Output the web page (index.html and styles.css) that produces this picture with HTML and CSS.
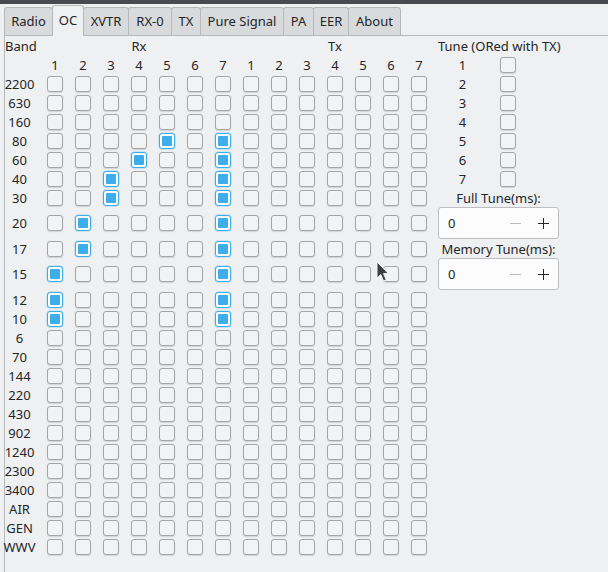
FILE: index.html
```html
<!DOCTYPE html>
<html>
<head>
<meta charset="utf-8">
<link rel="stylesheet" href="styles.css">
</head>
<body>
<div class="strip"></div>
<div class="tabbar">
  <div class="tab t-radio">Radio</div>
  <div class="tab t-oc active">OC</div>
  <div class="tab t-xvtr">XVTR</div>
  <div class="tab t-rx0">RX-0</div>
  <div class="tab t-tx">TX</div>
  <div class="tab t-ps">Pure Signal</div>
  <div class="tab t-pa">PA</div>
  <div class="tab t-eer">EER</div>
  <div class="tab t-about">About</div>
</div>
<div class="pane">
  <div class="grid">
    <div class="hd band-hd">Band</div>
    <div class="hd rx-hd">Rx</div>
    <div class="hd tx-hd">Tx</div>

    <div class="num first">1</div><div class="num">2</div><div class="num">3</div><div class="num">4</div><div class="num">5</div><div class="num">6</div><div class="num">7</div><div class="num">1</div><div class="num">2</div><div class="num">3</div><div class="num">4</div><div class="num">5</div><div class="num">6</div><div class="num">7</div>

    <div class="bl">2200</div><i class="cb"></i><i class="cb"></i><i class="cb"></i><i class="cb"></i><i class="cb"></i><i class="cb"></i><i class="cb"></i><i class="cb"></i><i class="cb"></i><i class="cb"></i><i class="cb"></i><i class="cb"></i><i class="cb"></i><i class="cb"></i>
    <div class="bl">630</div><i class="cb"></i><i class="cb"></i><i class="cb"></i><i class="cb"></i><i class="cb"></i><i class="cb"></i><i class="cb"></i><i class="cb"></i><i class="cb"></i><i class="cb"></i><i class="cb"></i><i class="cb"></i><i class="cb"></i><i class="cb"></i>
    <div class="bl">160</div><i class="cb"></i><i class="cb"></i><i class="cb"></i><i class="cb"></i><i class="cb"></i><i class="cb"></i><i class="cb"></i><i class="cb"></i><i class="cb"></i><i class="cb"></i><i class="cb"></i><i class="cb"></i><i class="cb"></i><i class="cb"></i>
    <div class="bl">80</div><i class="cb"></i><i class="cb"></i><i class="cb"></i><i class="cb"></i><i class="cb on"></i><i class="cb"></i><i class="cb on"></i><i class="cb"></i><i class="cb"></i><i class="cb"></i><i class="cb"></i><i class="cb"></i><i class="cb"></i><i class="cb"></i>
    <div class="bl">60</div><i class="cb"></i><i class="cb"></i><i class="cb"></i><i class="cb on"></i><i class="cb"></i><i class="cb"></i><i class="cb on"></i><i class="cb"></i><i class="cb"></i><i class="cb"></i><i class="cb"></i><i class="cb"></i><i class="cb"></i><i class="cb"></i>
    <div class="bl">40</div><i class="cb"></i><i class="cb"></i><i class="cb on"></i><i class="cb"></i><i class="cb"></i><i class="cb"></i><i class="cb on"></i><i class="cb"></i><i class="cb"></i><i class="cb"></i><i class="cb"></i><i class="cb"></i><i class="cb"></i><i class="cb"></i>
    <div class="bl">30</div><i class="cb"></i><i class="cb"></i><i class="cb on"></i><i class="cb"></i><i class="cb"></i><i class="cb"></i><i class="cb on"></i><i class="cb"></i><i class="cb"></i><i class="cb"></i><i class="cb"></i><i class="cb"></i><i class="cb"></i><i class="cb"></i>
    <div class="bl">20</div><i class="cb"></i><i class="cb on"></i><i class="cb"></i><i class="cb"></i><i class="cb"></i><i class="cb"></i><i class="cb on"></i><i class="cb"></i><i class="cb"></i><i class="cb"></i><i class="cb"></i><i class="cb"></i><i class="cb"></i><i class="cb"></i>
    <div class="bl">17</div><i class="cb"></i><i class="cb on"></i><i class="cb"></i><i class="cb"></i><i class="cb"></i><i class="cb"></i><i class="cb on"></i><i class="cb"></i><i class="cb"></i><i class="cb"></i><i class="cb"></i><i class="cb"></i><i class="cb"></i><i class="cb"></i>
    <div class="bl">15</div><i class="cb on"></i><i class="cb"></i><i class="cb"></i><i class="cb"></i><i class="cb"></i><i class="cb"></i><i class="cb on"></i><i class="cb"></i><i class="cb"></i><i class="cb"></i><i class="cb"></i><i class="cb"></i><i class="cb"></i><i class="cb"></i>
    <div class="bl">12</div><i class="cb on"></i><i class="cb"></i><i class="cb"></i><i class="cb"></i><i class="cb"></i><i class="cb"></i><i class="cb on"></i><i class="cb"></i><i class="cb"></i><i class="cb"></i><i class="cb"></i><i class="cb"></i><i class="cb"></i><i class="cb"></i>
    <div class="bl">10</div><i class="cb on"></i><i class="cb"></i><i class="cb"></i><i class="cb"></i><i class="cb"></i><i class="cb"></i><i class="cb on"></i><i class="cb"></i><i class="cb"></i><i class="cb"></i><i class="cb"></i><i class="cb"></i><i class="cb"></i><i class="cb"></i>
    <div class="bl">6</div><i class="cb"></i><i class="cb"></i><i class="cb"></i><i class="cb"></i><i class="cb"></i><i class="cb"></i><i class="cb"></i><i class="cb"></i><i class="cb"></i><i class="cb"></i><i class="cb"></i><i class="cb"></i><i class="cb"></i><i class="cb"></i>
    <div class="bl">70</div><i class="cb"></i><i class="cb"></i><i class="cb"></i><i class="cb"></i><i class="cb"></i><i class="cb"></i><i class="cb"></i><i class="cb"></i><i class="cb"></i><i class="cb"></i><i class="cb"></i><i class="cb"></i><i class="cb"></i><i class="cb"></i>
    <div class="bl">144</div><i class="cb"></i><i class="cb"></i><i class="cb"></i><i class="cb"></i><i class="cb"></i><i class="cb"></i><i class="cb"></i><i class="cb"></i><i class="cb"></i><i class="cb"></i><i class="cb"></i><i class="cb"></i><i class="cb"></i><i class="cb"></i>
    <div class="bl">220</div><i class="cb"></i><i class="cb"></i><i class="cb"></i><i class="cb"></i><i class="cb"></i><i class="cb"></i><i class="cb"></i><i class="cb"></i><i class="cb"></i><i class="cb"></i><i class="cb"></i><i class="cb"></i><i class="cb"></i><i class="cb"></i>
    <div class="bl">430</div><i class="cb"></i><i class="cb"></i><i class="cb"></i><i class="cb"></i><i class="cb"></i><i class="cb"></i><i class="cb"></i><i class="cb"></i><i class="cb"></i><i class="cb"></i><i class="cb"></i><i class="cb"></i><i class="cb"></i><i class="cb"></i>
    <div class="bl">902</div><i class="cb"></i><i class="cb"></i><i class="cb"></i><i class="cb"></i><i class="cb"></i><i class="cb"></i><i class="cb"></i><i class="cb"></i><i class="cb"></i><i class="cb"></i><i class="cb"></i><i class="cb"></i><i class="cb"></i><i class="cb"></i>
    <div class="bl">1240</div><i class="cb"></i><i class="cb"></i><i class="cb"></i><i class="cb"></i><i class="cb"></i><i class="cb"></i><i class="cb"></i><i class="cb"></i><i class="cb"></i><i class="cb"></i><i class="cb"></i><i class="cb"></i><i class="cb"></i><i class="cb"></i>
    <div class="bl">2300</div><i class="cb"></i><i class="cb"></i><i class="cb"></i><i class="cb"></i><i class="cb"></i><i class="cb"></i><i class="cb"></i><i class="cb"></i><i class="cb"></i><i class="cb"></i><i class="cb"></i><i class="cb"></i><i class="cb"></i><i class="cb"></i>
    <div class="bl">3400</div><i class="cb"></i><i class="cb"></i><i class="cb"></i><i class="cb"></i><i class="cb"></i><i class="cb"></i><i class="cb"></i><i class="cb"></i><i class="cb"></i><i class="cb"></i><i class="cb"></i><i class="cb"></i><i class="cb"></i><i class="cb"></i>
    <div class="bl">AIR</div><i class="cb"></i><i class="cb"></i><i class="cb"></i><i class="cb"></i><i class="cb"></i><i class="cb"></i><i class="cb"></i><i class="cb"></i><i class="cb"></i><i class="cb"></i><i class="cb"></i><i class="cb"></i><i class="cb"></i><i class="cb"></i>
    <div class="bl">GEN</div><i class="cb"></i><i class="cb"></i><i class="cb"></i><i class="cb"></i><i class="cb"></i><i class="cb"></i><i class="cb"></i><i class="cb"></i><i class="cb"></i><i class="cb"></i><i class="cb"></i><i class="cb"></i><i class="cb"></i><i class="cb"></i>
    <div class="bl">WWV</div><i class="cb"></i><i class="cb"></i><i class="cb"></i><i class="cb"></i><i class="cb"></i><i class="cb"></i><i class="cb"></i><i class="cb"></i><i class="cb"></i><i class="cb"></i><i class="cb"></i><i class="cb"></i><i class="cb"></i><i class="cb"></i>

    <div class="rc r1 tune-hd">Tune (ORed with TX)</div>
    <div class="rc r2 tune"><span class="tn">1</span><i class="cb"></i></div>
    <div class="rc r3 tune"><span class="tn">2</span><i class="cb"></i></div>
    <div class="rc r4 tune"><span class="tn">3</span><i class="cb"></i></div>
    <div class="rc r5 tune"><span class="tn">4</span><i class="cb"></i></div>
    <div class="rc r6 tune"><span class="tn">5</span><i class="cb"></i></div>
    <div class="rc r7 tune"><span class="tn">6</span><i class="cb"></i></div>
    <div class="rc r8 tune"><span class="tn">7</span><i class="cb"></i></div>
    <div class="rc r9 lbl">Full Tune(ms):</div>
    <div class="rc r10 spin">
      <span class="val">0</span>
      <svg class="minus" width="11" height="11" viewBox="0 0 11 11"><path d="M0 5.5H11" stroke="#b9bbbd" stroke-width="1"/></svg>
      <svg class="plus" width="11" height="11" viewBox="0 0 11 11"><path d="M0 5.5H11M5.5 0V11" stroke="#232629" stroke-width="1"/></svg>
    </div>
    <div class="rc r11 lbl">Memory Tune(ms):</div>
    <div class="rc r12 spin">
      <span class="val">0</span>
      <svg class="minus" width="11" height="11" viewBox="0 0 11 11"><path d="M0 5.5H11" stroke="#b9bbbd" stroke-width="1"/></svg>
      <svg class="plus" width="11" height="11" viewBox="0 0 11 11"><path d="M0 5.5H11M5.5 0V11" stroke="#232629" stroke-width="1"/></svg>
    </div>
  </div>
</div>
<svg class="cursor" width="14" height="22" viewBox="0 0 14 22"><path d="M1 1V17L4.8 13.6L7.6 20L10.2 18.8L7.5 12.6H12.4Z" fill="#3a3d41" stroke="#f4f4f4" stroke-width="1" stroke-linejoin="round"/></svg>
</body>
</html>
```
FILE: styles.css
```css
html, body {
  margin: 0;
  padding: 0;
  background: #eff0f1;
  font-family: "Noto Sans", "DejaVu Sans", sans-serif;
  font-size: 13px;
  color: #232629;
  overflow: hidden;
}
.strip {
  height: 4px;
  background: #474b50;
}
.tabbar {
  display: flex;
  align-items: flex-end;
  height: 31px;
  padding-left: 4px;
  position: relative;
  z-index: 1;
}
.tab {
  box-sizing: border-box;
  height: 28px;
  line-height: 27px;
  text-align: center;
  background: #d9dadc;
  border: 1px solid #b5b7b9;
  border-bottom: none;
  border-radius: 3px 3px 0 0;
  margin-left: -1px;
  white-space: nowrap;
}
.tab:first-child { margin-left: 0; }
.t-radio { width: 49px; }
.t-oc { width: 32px; }
.t-xvtr { width: 46px; }
.t-rx0 { width: 44px; }
.t-tx { width: 30px; }
.t-ps { width: 84px; }
.t-pa { width: 31px; }
.t-eer { width: 36px; }
.t-about { width: 53px; }
.tab.active {
  height: 31px;
  line-height: 29px;
  background: #eff0f1;
  margin-bottom: -1px;
  position: relative;
  z-index: 2;
}
.pane {
  margin-left: 4px;
  border-left: 1px solid #b5b7b9;
  border-top: 1px solid #b5b7b9;
  height: 540px;
}
.grid {
  display: grid;
  grid-template-columns: 36px repeat(14, 28px) 5px 121px;
  grid-template-rows: repeat(9, 19px) 32px 19px 32px repeat(14, 19px);
  align-items: center;
}
.hd { white-space: nowrap; }
.band-hd { grid-column: 1; grid-row: 1; }
.rx-hd { grid-column: 2 / span 7; grid-row: 1; text-align: center; }
.tx-hd { grid-column: 9 / span 7; grid-row: 1; text-align: center; }
.num { text-align: center; }
.num.first { grid-column: 2; }
.bl {
  grid-column: 1;
  display: flex;
  justify-content: center;
  padding-right: 7px;
  white-space: nowrap;
}
.cb {
  display: block;
  box-sizing: border-box;
  width: 16px;
  height: 16px;
  justify-self: center;
  border: 1px solid #a3a5a7;
  border-radius: 3px;
  background: #f2f3f4;
  box-shadow: 0 1px 1px rgba(0,0,0,0.12);
  position: relative;
}
.cb.on {
  border-color: #3daee9;
  background: #fcfcfc;
  box-shadow: 0 0 0 0.5px rgba(61,174,233,0.4);
}
.cb.on::after {
  content: "";
  position: absolute;
  left: 2px;
  top: 2px;
  width: 10px;
  height: 10px;
  background: #3daee9;
  border-radius: 1px;
}
.rc { grid-column: 17; }
.r1 { grid-row: 1; }
.r2 { grid-row: 2; }
.r3 { grid-row: 3; }
.r4 { grid-row: 4; }
.r5 { grid-row: 5; }
.r6 { grid-row: 6; }
.r7 { grid-row: 7; }
.r8 { grid-row: 8; }
.r9 { grid-row: 9; }
.r10 { grid-row: 10; }
.r11 { grid-row: 11; }
.r12 { grid-row: 12; }
.tune-hd { white-space: nowrap; }
.tune {
  display: flex;
  align-items: center;
}
.tune .tn {
  width: 49px;
  text-align: center;
}
.tune .cb { margin-left: 13px; }
.lbl {
  text-align: center;
  white-space: nowrap;
}
.spin {
  box-sizing: border-box;
  height: 32px;
  border: 1px solid #bcbec0;
  border-radius: 3px;
  background: #fcfcfc;
  display: flex;
  align-items: center;
  padding-left: 9px;
}
.spin .val { flex: 1; }
.spin .minus { margin-right: 17px; }
.spin .plus { margin-right: 9px; }
.cursor {
  position: absolute;
  left: 376px;
  top: 261px;
}
```
